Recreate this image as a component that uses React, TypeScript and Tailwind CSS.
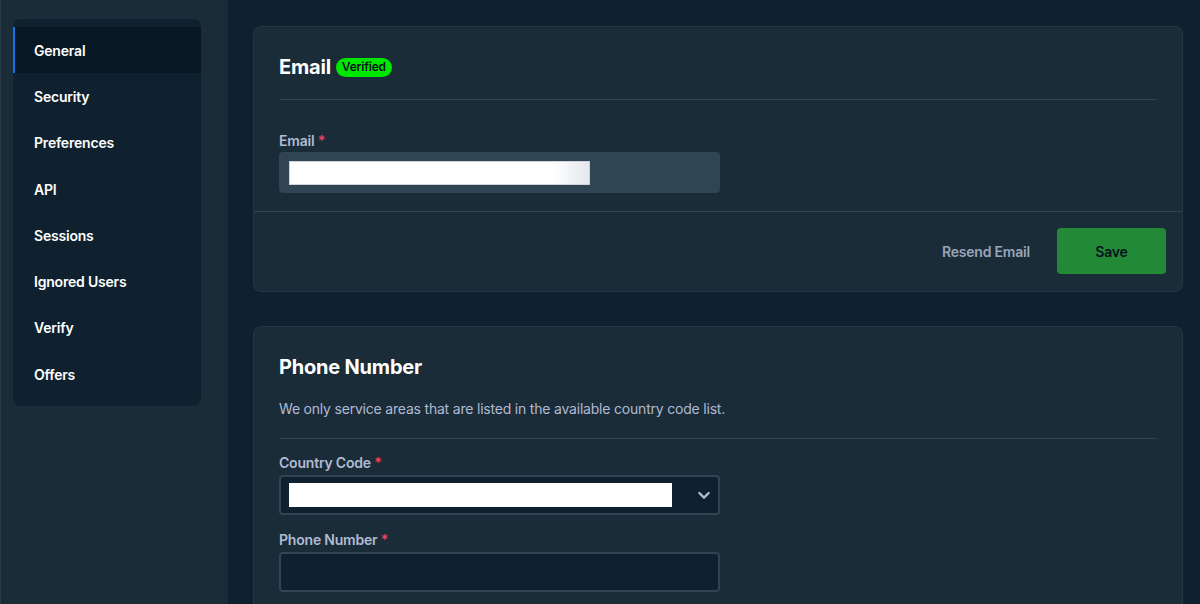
import React from "react";

const items = ["General", "Security", "Preferences", "API", "Sessions", "Ignored Users", "Verify", "Offers"];

function Chevron() {
  return (
    <svg width="16" height="16" viewBox="0 0 24 24" fill="none" stroke="#b1bad3" strokeWidth="3.5" strokeLinecap="round" strokeLinejoin="round">
      <path d="M5 9l7 7 7-7" />
    </svg>
  );
}

function Label({ text }: { text: string }) {
  return (
    <div className="text-[14px] leading-[20px] font-semibold text-[#b1bad3]">
      {text} <span className="text-[#ed4163]">*</span>
    </div>
  );
}

export default function App() {
  return (
    <div className="w-[1200px] h-[604px] flex overflow-hidden text-white tracking-[-0.2px]" style={{ fontFamily: "Inter, 'Noto Sans', sans-serif" }}>
      <div className="w-[228px] shrink-0 bg-[#1a2c38] pt-[19px] pl-[12px] border-l border-[#2a3c48]">
        <div className="w-[188px] rounded-lg bg-[#0f212e] pt-2 pb-[9px]">
          {items.map((it, i) => (
            <div
              key={it}
              className={
                i === 0
                  ? "h-[46.3px] flex items-center pl-[19px] bg-[#071824] border-l-[2px] border-[#1475e1] text-[14px] font-semibold"
                  : "h-[46.3px] flex items-center pl-[21px] text-[14px] font-semibold"
              }
            >
              {it}
            </div>
          ))}
        </div>
      </div>
      <div className="flex-1 bg-[#0f212e] pt-[26px] pl-[25px] pr-[17px] flex flex-col gap-[34px]">
        <div className="shrink-0 rounded-lg bg-[#1a2c38] border border-[#243745]">
          <div className="px-[25px] pt-[26px] pb-[18px]">
            <div className="flex items-center gap-[5px] h-[28px]">
              <span className="text-[20px] font-bold leading-[28px]">Email</span>
              <span className="h-[19px] px-[6px] rounded-full bg-[#00e701] text-[#05121d] text-[12px] font-semibold flex items-center">Verified</span>
            </div>
            <div className="h-px bg-[#2f4553] mt-[18px]" />
            <div className="mt-[31px]">
              <Label text="Email" />
            </div>
            <div className="mt-[1px] w-[441px] h-[41px] rounded bg-[#2f4553] flex items-center pl-[10px]">
              <div className="w-[301px] h-[24px] border border-[#d0d4da]" style={{ background: "linear-gradient(to right, #ffffff 88%, #e4e7ec 100%)" }} />
            </div>
          </div>
          <div className="h-px bg-[#2f4553]" />
          <div className="flex items-center justify-end gap-[27px] pt-[16px] pb-[17px] pr-[16px]">
            <span className="text-[14px] font-semibold text-[#9aa5b8]">Resend Email</span>
            <div className="w-[109px] h-[46px] rounded bg-[#228a36] flex items-center justify-center text-[14px] font-semibold text-[#05121d]">Save</div>
          </div>
        </div>
        <div className="shrink-0 rounded-lg bg-[#1a2c38] border border-[#243745] px-[25px] pt-[26px] pb-[60px]">
          <div className="text-[20px] font-bold leading-[28px]">Phone Number</div>
          <div className="mt-[18px] text-[14px] leading-[20px] text-[#b1bad3]">We only service areas that are listed in the available country code list.</div>
          <div className="h-px bg-[#2f4553] mt-[19px]" />
          <div className="mt-[14px]">
            <Label text="Country Code" />
          </div>
          <div className="mt-[2px] w-[441px] h-[40px] rounded border-2 border-[#2f4553] bg-[#0f212e] flex items-center pl-[8px] pr-[6px]">
            <div className="w-[383px] h-[24px] bg-white" />
            <div className="flex-1" />
            <Chevron />
          </div>
          <div className="mt-[15px]">
            <Label text="Phone Number" />
          </div>
          <div className="mt-[2px] w-[441px] h-[40px] rounded border-2 border-[#2f4553] bg-[#0f212e]" />
        </div>
      </div>
    </div>
  );
}
